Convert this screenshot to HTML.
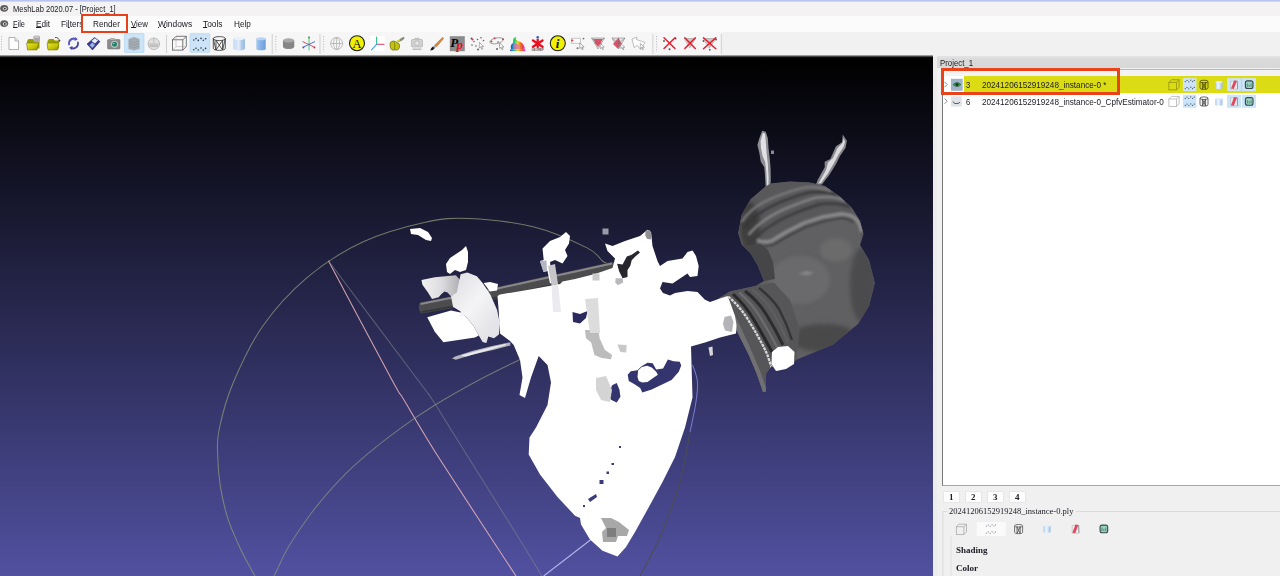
<!DOCTYPE html>
<html>
<head>
<meta charset="utf-8">
<title>MeshLab 2020.07 - [Project_1]</title>
<style>
html,body{margin:0;padding:0;}
body{width:1280px;height:576px;overflow:hidden;position:relative;background:#f0f0f0;font-family:"Liberation Sans",sans-serif;font-size:9px;color:#1a1a1a;filter:blur(0.4px);}
.abs{position:absolute;}
.t{position:absolute;white-space:nowrap;line-height:1;transform-origin:0 0;color:#20202a;}
.t u{text-decoration-thickness:0.8px;text-underline-offset:0.4px;}
#titlebar{left:0;top:0;width:1280px;height:16px;background:#f3f3f3;}
#topline{left:0;top:0;width:1280px;height:2px;background:linear-gradient(#aebcec,#d8dff5);}
#menubar{left:0;top:16px;width:1280px;height:16px;background:#fbfbfb;}
#toolbar{left:0;top:32px;width:1280px;height:24px;background:#f1f1f1;}
#tbwhite{left:0;top:32px;width:722px;height:24px;background:#f6f6f6;}
#darkline{left:0;top:55.4px;width:932.5px;height:2.8px;background:linear-gradient(#c8c8c8,#6a6a6a 35%,#101010 70%,#000);}
#viewport{left:0;top:57px;width:932.5px;height:519px;overflow:hidden;}
#vstrip{left:932.5px;top:57px;width:4.5px;height:519px;background:#ececec;}
#panel{left:937px;top:56px;width:343px;height:520px;background:#f0f0f0;}
#docktitle{left:936.5px;top:56.2px;width:343.5px;height:12px;background:linear-gradient(#e4e4e4,#dadada 30%,#d8d8d8);}
#list{left:942px;top:69px;width:338px;height:417px;background:#ffffff;border-left:1px solid #7a7a7a;border-bottom:1px solid #a8a8a8;border-top:1px solid #b8b8b8;box-sizing:border-box;}
#row1{left:964px;top:76px;width:316px;height:16.5px;background:#dcdc14;}
#redbox1{left:81.2px;top:14.2px;width:42.8px;height:15.3px;border:2.5px solid #e8401a;}
#redbox2{left:941px;top:68px;width:173px;height:21px;border:3px solid #e8431b;}
.tab{position:absolute;top:492px;width:15px;height:10px;background:#fdfdfd;box-shadow:0 0 0 0.5px #dcdcdc;}
.serifb{font-family:"Liberation Serif",serif;font-weight:bold;}
.mono{font-family:"Liberation Serif",serif;}
</style>
</head>
<body>
<div id="titlebar" class="abs"></div>
<div id="topline" class="abs"></div>
<div id="menubar" class="abs"></div>
<div id="toolbar" class="abs"></div>
<div id="tbwhite" class="abs"></div>

<!--TBSTART-->
<svg class="abs" style="left:0;top:0" width="740" height="56" viewBox="0 0 740 56">
<defs>
<linearGradient id="fold" x1="0" y1="0" x2="1" y2="1"><stop offset="0" stop-color="#e4e440"/><stop offset="0.6" stop-color="#c4c400"/><stop offset="1" stop-color="#8a8a00"/></linearGradient>
<linearGradient id="cylA" x1="0" y1="0" x2="1" y2="0"><stop offset="0" stop-color="#b8d0f0"/><stop offset="0.35" stop-color="#f0f6fc"/><stop offset="1" stop-color="#8cb4e4"/></linearGradient>
<linearGradient id="cylB" x1="0" y1="0" x2="1" y2="0"><stop offset="0" stop-color="#a8c8f0"/><stop offset="0.4" stop-color="#88b4e8"/><stop offset="1" stop-color="#6c9cd8"/></linearGradient>
<linearGradient id="rainbow" x1="0" y1="0" x2="1" y2="0"><stop offset="0" stop-color="#2040e0"/><stop offset="0.25" stop-color="#20c0a0"/><stop offset="0.5" stop-color="#e0e020"/><stop offset="0.75" stop-color="#f06020"/><stop offset="1" stop-color="#e020c0"/></linearGradient>
<symbol id="cursor" viewBox="0 0 8 10"><path d="M1 0.5 L1 7.5 L2.8 6 L4 9 L5.2 8.5 L4 5.6 L6.4 5.6 Z" fill="#ffffff" stroke="#707070" stroke-width="0.7"/></symbol>
</defs>
<!-- app icons in title/menu -->
<g id="appicons">
<ellipse cx="4.2" cy="8.3" rx="4" ry="3.4" fill="#606060"/><ellipse cx="4.8" cy="8.6" rx="2" ry="1.7" fill="#d8d8d8"/><circle cx="4.8" cy="8.6" r="0.9" fill="#303030"/>
<ellipse cx="4.2" cy="23.6" rx="4" ry="3.4" fill="#606060"/><ellipse cx="4.8" cy="23.9" rx="2" ry="1.7" fill="#d8d8d8"/><circle cx="4.8" cy="23.9" r="0.9" fill="#303030"/>
</g>
<!-- handles & separators -->
<g stroke="#b4b4b4" stroke-width="1" stroke-dasharray="1 1.6" fill="none">
<path d="M1.5 36 V51"/><path d="M275.8 36 V52"/><path d="M323.6 36 V52"/><path d="M656.6 36 V52"/>
</g>
<g stroke="#d0d0d0" stroke-width="1" fill="none"><path d="M166.5 35 V53"/><path d="M272.2 34 V54"/><path d="M320 34 V54"/><path d="M652.9 34 V54"/><path d="M721.3 34 V54"/></g>
<!-- 1 new -->
<path d="M9 37.5 H15 L18.5 41 V49.5 H9 Z" fill="#ffffff" stroke="#a0a0a0" stroke-width="0.8"/><path d="M15 37.5 V41 H18.5" fill="#e4e4e4" stroke="#a0a0a0" stroke-width="0.7"/>
<!-- 2 folder+db -->
<g><path d="M27 41 L28.5 39 H33 L34.3 40.5 H39.5 V48.5 H27 Z" fill="#9c9c00"/><path d="M26.5 43 H38.5 L37 50 H27.5 Z" fill="url(#fold)" stroke="#6c6c00" stroke-width="0.5"/>
<path d="M33.5 37 V41 A3.2 1.3 0 0 0 39.9 41 V37 Z" fill="#a8a8a8"/><ellipse cx="36.7" cy="37" rx="3.2" ry="1.3" fill="#d0d0d0" stroke="#888" stroke-width="0.4"/></g>
<!-- 3 folder+arrow -->
<g><path d="M47.5 41 L49 39 H53.5 L54.8 40.5 H59 V48.5 H47.5 Z" fill="#9c9c00"/><path d="M47 43 H59 L57.5 50 H48 Z" fill="url(#fold)" stroke="#6c6c00" stroke-width="0.5"/>
<path d="M55 37.5 Q58.5 37 59.5 41" fill="none" stroke="#404040" stroke-width="0.9"/><path d="M58.3 40.5 L59.7 42.2 L60.5 40 Z" fill="#404040"/></g>
<!-- 4 reload -->
<g fill="none" stroke-linecap="round"><path d="M69 44.5 Q68.5 39.5 73.5 38.5 L76 39" stroke="#5858c0" stroke-width="1.8"/><path d="M78 42.5 Q78.5 47.5 73.5 48.5 L71 48" stroke="#4848a8" stroke-width="1.8"/><path d="M75 37 L77.8 39.5 L74.5 41 Z" fill="#5858c0" stroke="none"/><path d="M72 50 L69.2 47.5 L72.5 46 Z" fill="#4848a8" stroke="none"/></g>
<!-- 5 save -->
<g><path d="M87 44 L94.5 37.5 L100 41.5 L92.5 50 Z" fill="#38388c" stroke="#20205c" stroke-width="0.5"/><path d="M91.5 41 L94.8 38.3 L98 40.6 L95 43.5 Z" fill="#e8eef8"/><path d="M89.5 45 L92.5 42.5 L95 45 L92.3 48 Z" fill="#9ab4e0"/></g>
<!-- 6 camera -->
<g><rect x="107.5" y="39.5" width="12.5" height="9.5" rx="1" fill="#8c8c8c" stroke="#686868" stroke-width="0.5"/><rect x="110" y="38" width="5" height="2" fill="#b0b0b0"/><circle cx="114.5" cy="44.3" r="3.4" fill="#d0d0d0"/><circle cx="114.5" cy="44.3" r="2.5" fill="#208068"/><circle cx="113.8" cy="43.6" r="0.8" fill="#80d0b8"/></g>
<!-- 7 layers (checked) -->
<g><rect x="124.5" y="33.5" width="19.5" height="19" rx="1" fill="#cce4f7" stroke="#a8d0f0" stroke-width="0.6"/><path d="M128.5 39 L134 37 L139.5 39 V49 L134 50.5 L128.5 49 Z" fill="#a4acb4"/><g stroke="#848c94" stroke-width="0.45" fill="none"><path d="M128.5 41 L134 42.5 L139.5 41"/><path d="M128.5 43.5 L134 45 L139.5 43.5"/><path d="M128.5 46 L134 47.5 L139.5 46"/></g></g>
<!-- 8 grey globe -->
<g><circle cx="153.8" cy="43.8" r="5.8" fill="#e0e0e0" stroke="#b0b0b0" stroke-width="0.8"/><path d="M148 44 H159.6 M153.8 38 V44" stroke="#b4b4b4" stroke-width="0.7" fill="none"/><rect x="149.5" y="44.5" width="8.5" height="2.6" fill="#c0c0c0"/></g>
<!-- 9 bbox cube -->
<g fill="none" stroke="#585858" stroke-width="0.8"><rect x="172.5" y="39.8" width="10.3" height="10.3" fill="#fafafa"/><path d="M172.5 39.8 L176 36.3 H186.3 V46.6 L182.8 50.1 M182.8 39.8 L186.3 36.3"/><path d="M176 36.3 V46.6 H186.3 M176 46.6 L172.5 50.1" stroke="#a0a0a0" stroke-width="0.5"/></g>
<!-- 10 points (checked) -->
<g><rect x="190" y="33.7" width="19.8" height="18.6" rx="1" fill="#cce4f7" stroke="#a8d0f0" stroke-width="0.6"/><g fill="#303848"><circle cx="193.8" cy="40" r="0.8"/><circle cx="196" cy="38.6" r="0.8"/><circle cx="198.3" cy="40.4" r="0.8"/><circle cx="201" cy="38.4" r="0.8"/><circle cx="203.3" cy="40.2" r="0.8"/><circle cx="205.6" cy="38.8" r="0.8"/><circle cx="193.8" cy="49.8" r="0.8"/><circle cx="196" cy="48.2" r="0.8"/><circle cx="198.3" cy="50" r="0.8"/><circle cx="201" cy="48" r="0.8"/><circle cx="203.3" cy="50" r="0.8"/><circle cx="205.6" cy="48.4" r="0.8"/></g></g>
<!-- 11 wire cyl -->
<g fill="none" stroke="#303030" stroke-width="0.8"><ellipse cx="219.3" cy="38.6" rx="6" ry="2"/><path d="M213.3 38.6 V48.4 A6 2 0 0 0 225.3 48.4 V38.6"/><path d="M216 40.3 V50 M222.6 40.3 V50 M216 40.3 L222.6 50 M222.6 40.3 L216 50 M213.3 38.6 L216 50 M225.3 38.6 L222.6 50"/></g>
<!-- 12 light cyl -->
<g><path d="M233.5 38.5 V48.8 A5.7 1.6 0 0 0 244.9 48.8 V38.5 Z" fill="url(#cylA)"/><ellipse cx="239.2" cy="38.5" rx="5.7" ry="1.6" fill="#e8f0fa"/><path d="M237 40 V50.2 M241.5 40 V50.2" stroke="#9cbce4" stroke-width="0.5"/></g>
<!-- 13 blue cyl -->
<g><path d="M256.3 38.8 V48.8 A4.7 1.5 0 0 0 265.7 48.8 V38.8 Z" fill="url(#cylB)"/><ellipse cx="261" cy="38.8" rx="4.7" ry="1.5" fill="#b8d4f4"/></g>
<!-- 14 grey mesh cyl -->
<g><path d="M283 40.3 V47 A5.6 2 0 0 0 294.2 47 V40.3 Z" fill="#8c8c8c"/><ellipse cx="288.6" cy="40.3" rx="5.6" ry="2" fill="#a8a8a8"/><path d="M283 42.5 A5.6 2 0 0 0 294.2 42.5 M283 44.8 A5.6 2 0 0 0 294.2 44.8" stroke="#6c6c6c" stroke-width="0.5" fill="none"/></g>
<!-- 15 axis small -->
<g fill="none" stroke-width="0.9"><path d="M309 36.8 V50.4" stroke="#40c060"/><path d="M302.5 41.5 L315 47.5" stroke="#d04060"/><path d="M302.5 47.5 L315 41.5" stroke="#4060d0"/><circle cx="303.5" cy="47.5" r="0.9" fill="#7050c0" stroke="none"/><circle cx="314.5" cy="47.5" r="0.9" fill="#c03040" stroke="none"/><circle cx="309" cy="37.5" r="0.9" fill="#30a050" stroke="none"/></g>
<!-- 16 globe wire -->
<g fill="none" stroke="#b0b0b0" stroke-width="0.8"><circle cx="336.6" cy="43.5" r="6"/><path d="M330.6 43.5 H342.6 M336.6 37.5 V49.5"/><ellipse cx="336.6" cy="43.5" rx="3" ry="6"/></g>
<!-- 17 yellow A -->
<g><circle cx="357" cy="43.2" r="7.5" fill="#f0f000" stroke="#202020" stroke-width="1.1"/><text x="357" y="47.6" font-family="Liberation Serif" font-size="12.5" text-anchor="middle" fill="#101010">A</text></g>
<!-- 18 axis xyz -->
<g><rect x="370" y="35.8" width="14.6" height="15.4" fill="#ffffff"/><g fill="none" stroke-width="1.1" stroke-linecap="round"><path d="M376.6 44.4 V37" stroke="#30c090"/><path d="M376.6 44.4 H384" stroke="#e06080"/><path d="M376.6 44.4 L371.5 49.8" stroke="#40a0e0"/></g></g>
<!-- 19 apple+brush -->
<g><path d="M390 45 Q389.5 41.5 393 41 Q396 41 397 43 Q399 42.5 399.5 45 Q400 48.5 397.5 50 H392 Q390 48.5 390 45 Z" fill="#c4c410" stroke="#505000" stroke-width="0.6"/><path d="M394 42 Q395.5 45 394.5 49.5" stroke="#606000" stroke-width="0.6" fill="none"/><path d="M396.5 42.5 L401 38.5 L403.8 37.2 L404.2 38.4 L402 40.3 Z" fill="#8c8c70" stroke="#505040" stroke-width="0.4"/><path d="M395 43 Q396 40 399 39.5 L400.5 41 Z" fill="#d8d820"/></g>
<!-- 20 grey align camera -->
<g><rect x="411.5" y="39.5" width="11" height="7.5" rx="1" fill="#d0d0d0" stroke="#a8a8a8" stroke-width="0.6"/><rect x="414.5" y="37.8" width="5" height="2" fill="#c0c0c0"/><circle cx="417" cy="43.2" r="2.2" fill="#e8e8e8" stroke="#a0a0a0" stroke-width="0.5"/><rect x="412.5" y="48.5" width="9" height="1.4" fill="#b8b8b8"/></g>
<!-- 21 paint brush -->
<g><path d="M442.6 37.3 L443.6 38.6 L436.5 46.8 L434.6 45.2 Z" fill="#d88838" stroke="#905018" stroke-width="0.4"/><path d="M436.5 46.8 L434.6 45.2 L433 46.4 L434.6 48.2 Z" fill="#a0a0a0"/><path d="M434.6 48.2 L433 46.4 Q431 47.2 430.2 50.6 Q433.5 50.3 434.6 48.2 Z" fill="#181818"/></g>
<!-- 22 Pp -->
<g><rect x="449.8" y="36.2" width="15" height="15" fill="#8c8c8c"/><text x="450.3" y="46.5" font-family="Liberation Serif" font-weight="bold" font-style="italic" font-size="13" fill="#000000">P</text><text x="456.6" y="48.8" font-family="Liberation Serif" font-weight="bold" font-style="italic" font-size="13" fill="#e01020">p</text></g>
<!-- 23 points+cursor -->
<g><g fill="#606068"><circle cx="471.5" cy="38.5" r="1"/><circle cx="474" cy="41.5" r="0.8"/><circle cx="477.5" cy="39.5" r="0.8"/><circle cx="481" cy="37.8" r="0.8"/><circle cx="483.5" cy="40.5" r="0.8"/><circle cx="472" cy="45" r="0.8"/><circle cx="476" cy="46" r="0.8"/><circle cx="478" cy="49.5" r="1"/></g><circle cx="472.5" cy="39.5" r="1.1" fill="#d04050"/><use href="#cursor" x="478.5" y="42" width="6.4" height="8"/></g>
<!-- 24 points+ellipse+cursor -->
<g><ellipse cx="496.5" cy="40.8" rx="6.8" ry="2.8" fill="none" stroke="#808088" stroke-width="0.7" transform="rotate(-12 496.5 40.8)"/><g fill="#c04050"><circle cx="491.5" cy="41.5" r="1"/><circle cx="494.5" cy="38.2" r="1"/><circle cx="503" cy="39.3" r="1"/></g><g fill="#606068"><circle cx="498" cy="42" r="0.8"/><circle cx="497" cy="49" r="1"/><circle cx="500" cy="45" r="0.7"/></g><use href="#cursor" x="498.8" y="42.5" width="6.4" height="8"/></g>
<!-- 25 rainbow bunny -->
<g><path d="M511 49 Q510 44.5 513 43 Q512.5 40 514.5 38 Q515 36.5 516 37 Q516.5 38.5 515.8 40 Q517.5 39.5 518 41 Q521 41.5 523 44 Q525 46.5 524.5 49.5 Z" fill="url(#rainbow)"/><path d="M513.5 45 Q516 42.5 519 45 Q520 47 519 49.5 H514 Z" fill="#f060c0" opacity="0.7"/><path d="M514.2 38 Q513.8 40.5 515.2 41" stroke="#20c040" stroke-width="1.2" fill="none"/><rect x="510.2" y="49.3" width="15" height="1.8" fill="url(#rainbow)"/></g>
<!-- 26 georef -->
<g><g stroke="#e81020" stroke-width="2.4" stroke-linecap="round"><path d="M533 40.5 L542.5 46.8"/><path d="M542.5 40.5 L533 46.8"/><path d="M537.7 39.8 V47"/></g><circle cx="537.7" cy="37.2" r="1.3" fill="#3060e0"/><text x="537.7" y="51" font-family="Liberation Sans" font-size="2.9" font-weight="bold" text-anchor="middle" fill="#505050">GEOREF</text></g>
<!-- 27 yellow i -->
<g><circle cx="557.8" cy="43.3" r="7.5" fill="#f0f000" stroke="#202020" stroke-width="1.1"/><text x="557.6" y="47.8" font-family="Liberation Serif" font-style="italic" font-weight="bold" font-size="13" text-anchor="middle" fill="#101010">i</text></g>
<!-- 28 rect select -->
<g><rect x="571.5" y="38.2" width="9" height="5" fill="#fafafa" stroke="#a8a8a8" stroke-width="0.6"/><circle cx="572.2" cy="40.5" r="1.1" fill="#d04050"/><circle cx="583.5" cy="38.6" r="0.9" fill="#707078"/><circle cx="577.5" cy="48.2" r="1" fill="#707078"/><use href="#cursor" x="579" y="42.5" width="6.4" height="8"/></g>
<!-- 29 tri select -->
<g><path d="M591.5 38 H604.5 L598 49 Z" fill="#e4e4e4" stroke="#707070" stroke-width="0.5"/><path d="M593.5 39 L602.5 39 L600.5 43.5 L598 47 L595 43 Z" fill="#e05068"/><path d="M591.5 38 L598 43.5 L604.5 38 M594.5 43.5 H601.5" stroke="#707070" stroke-width="0.5" fill="none"/><use href="#cursor" x="599.5" y="43" width="6" height="7.5"/></g>
<!-- 30 tri select 2 -->
<g><path d="M612 38 H625 L618.5 49 Z" fill="#e4e4e4" stroke="#707070" stroke-width="0.5"/><path d="M613 44 L618.5 37.8 L622 44.5 L617.5 48.5 Z" fill="#e05068"/><path d="M612 38 L618.5 43.5 L625 38 M615 43.5 H622 M618.5 37.8 V48.5" stroke="#707070" stroke-width="0.5" fill="none"/><use href="#cursor" x="620" y="43" width="6" height="7.5"/></g>
<!-- 31 arrow poly -->
<g><path d="M632 39 L637 37 L636.5 39.5 L645 42.5 L640.5 49.5 L637.5 45.5 L634 47.5 Z" fill="#fcfcfc" stroke="#a8a8a8" stroke-width="0.7"/><use href="#cursor" x="639.5" y="43" width="6" height="7.5"/></g>
<!-- 32-34 red X -->
<g stroke="#e81828" stroke-width="1.4" stroke-linecap="round" fill="none">
<g fill="#505058" stroke="none"><circle cx="664" cy="41" r="0.9"/><circle cx="675.5" cy="38.5" r="1"/><circle cx="669.5" cy="49.2" r="1"/></g>
<path d="M664 37.8 L675 48.6 M675 37.8 L664 48.6"/>
<path d="M684.5 38.5 H695.5 L690 47.5 Z" fill="#c8c8c8" stroke="#909090" stroke-width="0.5"/><path d="M684.8 37.8 L695.3 48.6 M695.3 37.8 L684.8 48.6"/>
<path d="M703.5 38.5 H716 L709.5 48 Z" fill="#c8c8c8" stroke="#909090" stroke-width="0.5"/><g fill="#505058" stroke="none"><circle cx="703.5" cy="41" r="0.9"/><circle cx="716" cy="39.5" r="0.9"/><circle cx="709.8" cy="49.8" r="0.9"/></g><path d="M703.5 37.8 L715.8 48.8 M715.8 37.8 L703.5 48.8"/>
</g>
</svg>
<!--TBEND-->
<!-- title + menu text -->
<span class="t" id="ttl" style="left:12.5px;top:4.9px;font-size:9px;transform:scaleX(0.834);">MeshLab 2020.07 - [Project_1]</span>
<span class="t m" id="m1" style="left:12.8px;top:19.5px;transform:scaleX(0.82);"><u>F</u>ile</span>
<span class="t m" id="m2" style="left:35.6px;top:19.5px;transform:scaleX(0.908);"><u>E</u>dit</span>
<span class="t m" id="m3" style="left:60.6px;top:19.5px;transform:scaleX(0.913);">Fi<u>l</u>ters</span>
<span class="t m" id="m4" style="left:92.5px;top:19.5px;transform:scaleX(0.911);"><u>R</u>ender</span>
<span class="t m" id="m5" style="left:130.6px;top:19.5px;transform:scaleX(0.873);"><u>V</u>iew</span>
<span class="t m" id="m6" style="left:157.8px;top:19.5px;transform:scaleX(0.934);"><u>W</u>indows</span>
<span class="t m" id="m7" style="left:203px;top:19.5px;transform:scaleX(0.928);"><u>T</u>ools</span>
<span class="t m" id="m8" style="left:233.8px;top:19.5px;transform:scaleX(0.907);"><u>H</u>elp</span>

<div id="viewport" class="abs">
<svg id="vp" width="933" height="519" viewBox="0 57 933 519" style="display:block">
<defs>
<linearGradient id="bg" x1="0" y1="57" x2="0" y2="883" gradientUnits="userSpaceOnUse">
<stop offset="0" stop-color="#000000"/><stop offset="1" stop-color="#8080ff"/>
</linearGradient>
</defs>
<rect x="0" y="57" width="933" height="519" fill="url(#bg)"/>
<!--MESHSTART-->
<g id="trackball" fill="none" stroke-width="1.05">
<path d="M257.0 580.0 C255.9 578.0 253.4 573.3 250.7 568.2 C248.0 563.1 244.4 557.5 240.6 549.2 C236.8 541.0 231.3 529.3 227.9 518.7 C224.5 508.1 222.0 496.4 220.3 485.8 C218.6 475.2 217.9 464.7 217.7 455.4 C217.5 446.1 216.5 441.9 219.0 430.0 C221.5 418.1 225.3 401.4 232.7 384.0 C240.0 366.6 250.5 343.5 263.0 325.7 C275.4 308.0 290.7 291.3 307.3 277.3 C324.0 263.4 343.0 251.2 362.7 242.1 C382.4 232.9 407.6 226.2 425.3 222.3 C443.0 218.4 450.9 217.7 469.0 218.5 C487.1 219.3 514.4 222.2 534.1 227.1 C553.8 232.0 575.7 242.3 587.1 247.9 C598.5 253.6 598.7 258.0 602.5 261.0 C606.3 264.0 603.8 260.7 610.0 266.0" stroke="#8a9678" stroke-opacity="0.78"/>
<path d="M692.5 365.0 C695.1 371.1 697.0 375.8 697.5 382.5 C698.0 389.2 696.8 396.8 695.5 405.0 C694.2 413.2 692.6 419.2 690.0 432.0" stroke="#9090e8" stroke-opacity="0.75"/>
<path d="M690.0 432.0 C687.4 444.8 685.0 464.5 680.0 482.0 C675.0 499.5 666.7 521.3 660.0 537.0 C653.3 552.7 643.8 568.5 640.0 576.0 C636.2 583.5 637.5 581.0 637.0 582.0" stroke="#4e4e4c" stroke-opacity="0.9"/>
<path d="M328.4 260.8 C339.0 280.7 379.4 356.8 392.0 380.0 C404.6 403.2 396.0 386.8 404.0 400.0 C412.0 413.2 421.3 430.2 440.0 459.5 C458.7 488.8 502.7 555.6 516.0 576.0 C529.3 596.4 519.3 581.0 520.0 582.0" stroke="#e8b0b8" stroke-opacity="0.9"/>
<path d="M328.4 260.8 C343.3 280.7 400.5 356.8 417.9 380.0 C435.2 403.2 426.7 391.3 432.5 400.0 C438.3 408.7 437.9 408.7 452.5 432.0 C467.1 455.3 504.9 515.7 520.0 540.0 C535.1 564.3 539.2 571.7 543.0 578.0" stroke="#80808c" stroke-opacity="0.6"/>
<path d="M270.0 584.0 C271.0 582.0 272.9 578.2 276.0 572.0 C279.1 565.8 283.2 555.9 288.7 546.6 C294.2 537.3 301.8 525.9 309.0 516.2 C316.2 506.5 323.3 497.6 331.8 488.3 C340.3 479.0 348.6 470.3 360.0 460.4 C371.4 450.5 387.5 437.9 400.0 428.7 C412.5 419.5 421.8 413.1 435.0 405.0 C448.2 396.9 464.8 387.6 479.0 380.0 C493.2 372.4 513.2 362.9 520.0 359.5" stroke="#8c9680" stroke-opacity="0.7"/>
<path d="M543.7 576 L591 539.5" stroke="#c8c8ff" stroke-opacity="0.85"/>
</g>
<g id="pipe">
<defs>
<filter id="bl2" x="-20%" y="-20%" width="140%" height="140%"><feGaussianBlur stdDeviation="2.2"/></filter>
<filter id="bl1" x="-20%" y="-20%" width="140%" height="140%"><feGaussianBlur stdDeviation="0.8"/></filter>
<clipPath id="pipeclip"><path d="M766 186 L771 183.5 L790 181.5 L810 182.5 L825 186 L840.4 197 L852 208 L860 221 L863.5 234 L860 245 L869 260 L874.8 283 L869 306 L858 324 L833 344.4 L806 355.7 L796 360 L790 366 L778 371 L771.7 366 L766 374 L766 392 L763 392 L756.4 373 L748.8 355 L737.3 332 L727.7 313 L717 299.5 L729.7 291.5 L756 285.8 L764 281 L757.4 265 L750.6 253.5 L741.6 244.4 L738.2 233 L741.6 215 L750.6 199.3 Z"/></clipPath>
</defs>
<!-- antennas -->
<path d="M762.2 130.8 L765.7 131.8 L767.8 138 L768.5 147.8 L769.9 160.3 L770.6 168.6 L770.8 181 L769.9 188 L765.7 188 L765 175.6 L764.3 167.2 L760.8 161.7 L759.4 153.3 L757.4 145 L759.4 138 Z" fill="#8e8e92"/>
<path d="M762.8 133 L765 133.5 L765.8 142 L766.5 152 L767.8 164 L768.6 178 L768.4 186 L767 186 L766.4 172 L765.2 162 L762.6 156 L761 148 L760.6 141 Z" fill="#e2e2e6"/>
<rect x="771" y="150.5" width="3" height="3.5" fill="#8a8a90"/>
<path d="M842.8 134.6 L846.9 140.8 L845.6 147.8 L840 156 L835.8 164.4 L828.9 175.6 L821.9 184.6 L815.7 185.3 L817.8 179.7 L824.7 167.2 L824.7 161.7 L830.3 158.9 L835.8 146.4 L842 142.2 Z" fill="#88888c"/>
<path d="M843.5 138.5 L845 142 L843.5 147 L838.5 154.5 L834 163 L827.5 174 L821 183 L818.5 183.5 L826 170 L828 162.5 L833 158 L837.5 148 L842.5 143 Z" fill="#dcdce0"/>
<g clip-path="url(#pipeclip)">
<rect x="710" y="175" width="175" height="225" fill="#606062"/>
<!-- elbow shading -->
<ellipse cx="800" cy="280" rx="30" ry="24" fill="#727274" filter="url(#bl2)" opacity="0.6"/>
<ellipse cx="863" cy="285" rx="13" ry="38" fill="#4c4c4e" filter="url(#bl2)"/>
<ellipse cx="824" cy="338" rx="34" ry="14" fill="#48484a" filter="url(#bl2)"/>
<ellipse cx="836" cy="250" rx="16" ry="12" fill="#6e6e70" filter="url(#bl2)" opacity="0.8"/>
<path d="M798 274 L806 271 L814 272.5 L808 275.5 Z" fill="#858587" filter="url(#bl1)"/>
<!-- cap -->
<path d="M764 189 L771 183.5 L790 181.5 L810 182.5 L825 186 L840.4 197 L852 208 L860 221 L863.5 234 L860 246 L861.6 230 Q860.5 224 856 219 Q852 214.5 841.3 213.8 L822.5 216.9 L803.8 223 L785 232.5 L772.5 240.3 Q764 243.5 758 240 L754 250 L750.6 253.5 L741.6 244.4 L738.2 233 L741.6 215 L750.6 199.3 Z" fill="#58585a"/>
<ellipse cx="750" cy="226" rx="10" ry="24" fill="#3c3c3e" filter="url(#bl2)"/>
<g fill="none" filter="url(#bl1)">
<path d="M741.5 222 Q751 207 771.5 198.5 Q789 191 805 187.5 Q819 186 831 191" stroke="#7e7e80" stroke-width="2.2"/>
<path d="M744.5 228 Q755 213.5 776 204 Q793.5 196.5 809 192.5 Q824 190.5 837 195.5" stroke="#363638" stroke-width="2.2"/>
<path d="M748.5 235 Q759.5 221 781.5 210.5 Q799.5 202.5 814.5 198 Q831.5 195 845.5 200.5" stroke="#828284" stroke-width="2.6"/>
<path d="M752.5 241 Q764 228 786 217 Q804 209 819 204.5 Q836 201.5 850 207" stroke="#3a3a3c" stroke-width="2.4"/>
<path d="M757 240 Q764 243.5 772.5 240.3 L785 232.5 L803.8 223 L822.5 216.9 L841.3 213.8 Q852 214.5 856 219 Q860.5 224 861.6 232" stroke="#8a8a8c" stroke-width="3.4"/>
<path d="M759 245 Q766 247.5 774.5 244 L787 236.5 L805.5 227 L824 221 L841 218 Q850 218.5 854 223" stroke="#38383a" stroke-width="1.6"/>
</g>
<path d="M742 246 L752 255 L758 266 L764 281 L775 279 L773 262 L768 250 L760 244 Z" fill="#464648"/>
<!-- lower arm -->
<path d="M717 299.5 L729.7 291.5 L756 285.8 L774 282.4 L790 300 L800 330 L796 360 L790 366 L778 371 L771.7 366 L766 374 L766 392 L763 392 L756.4 373 L748.8 355 L737.3 332 L727.7 313 Z" fill="#565658"/>
<g fill="none">
<path d="M719 299 Q729 310 737 327 Q748 350 757 372 L764 392" stroke="#707072" stroke-width="6.5"/>
<path d="M728.2 296.5 Q738 305 745 315 Q753 327 758.6 337.7 Q764 347 767.7 355.7 L772.2 369.3" stroke="#d6d6d8" stroke-width="2.3" stroke-dasharray="3 0.9"/>
<path d="M733 294 Q746 306 754 320 Q764 337 772 352" stroke="#28282a" stroke-width="3"/>
<path d="M739 292.5 Q752 303 760 317 Q770 333 777 347" stroke="#6c6c6e" stroke-width="2.4"/>
<path d="M745 291 Q758 301 766 314 Q776 330 783 345" stroke="#2c2c2e" stroke-width="3"/>
<path d="M752 289.5 Q765 299 773 312 Q782 327 788 343" stroke="#5e5e60" stroke-width="2.4"/>
<path d="M759 288 Q771 297 779 309 Q787 324 792 340" stroke="#343436" stroke-width="2.4"/>
</g>
</g>
</g>
<g id="rod">
<path d="M420 302.5 L453 296 L491 288.5 L612 262 L628 264 L628 280 L612 273.5 L491 300 L453 308 L421 313.5 Q417 308 420 302.5 Z" fill="#4c4c4e"/>
<path d="M420.5 304 L453 297.5 L491 290 L612 263.5" stroke="#88888a" stroke-width="2" fill="none"/>
<path d="M421.5 312 L453 306.5 L491 298.5 L612 272" stroke="#353537" stroke-width="1.6" fill="none"/>
</g>
<g id="mesh" fill="#ffffff">
<!-- small blobs -->
<path d="M410 229 L420 228 L428 232 L432 238 L431 241 L426 240 L418 235 L411 234 Z"/>
<path d="M466 246 L468 252 L468 262 L466 270 L460 272 L455 270 L450 274 L447 272 L446 264 L450 258 L456 254 L462 250 Z"/>
<!-- left box -->
<defs><linearGradient id="ulg" x1="422" y1="285" x2="458" y2="285" gradientUnits="userSpaceOnUse"><stop offset="0" stop-color="#f2f2f2"/><stop offset="0.55" stop-color="#dcdcde"/><stop offset="1" stop-color="#b4b4b8"/></linearGradient>
<linearGradient id="drg" x1="455" y1="280" x2="500" y2="320" gradientUnits="userSpaceOnUse"><stop offset="0" stop-color="#e2e2e6"/><stop offset="0.5" stop-color="#f4f4f6"/><stop offset="1" stop-color="#e4e4e8"/></linearGradient></defs>
<path d="M421.5 280 L434.8 277.2 L455.9 275.3 L461 281 L458 293 L451 296.3 L447.5 292.5 L444.4 291.5 L441 294.5 L438.7 297.3 L432 299 L428 292.5 L422.4 284.8 Z" fill="url(#ulg)"/>
<path d="M427.2 317.3 L451 310.6 L460.6 312.5 L464.5 315.4 L473 325 L478.8 335.5 L475 337.4 L443.4 342.2 L434.8 331.7 Z" fill="#ffffff"/>
<path d="M460.6 274.3 L467.3 272.4 L476.9 276.2 L482.6 283 L490.3 294.4 L497 309.7 L499.8 323 L498.9 334.5 L494 338.3 L488.3 336.4 L486.4 343 L482.6 342 L478.8 335.5 L473 325 L464.5 315.4 L461.6 317.3 L460.6 311.6 L453 306.8 L451 296.3 L456.8 292.5 Z" fill="url(#drg)"/>
<path d="M483.6 283 L490 282 L498 284 L497 290.6 L490 291.5 Z" fill="#ffffff"/>
<!-- blob C -->
<path d="M542.5 248.5 L550 241 L560 237 L566 232 L570 236 L569 243.5 L565 250 L567.5 256 L562.5 263.5 L555 260 L550 262 L551 270 L555 281 L550 283.5 L547.5 271 L543.7 272 L540 261 L543.7 260 Z"/>
<!-- thin spike -->
<path d="M452 358.4 L455 356.5 L473 350.8 L492.2 346 L510.3 342.2 L510.3 345.5 L494 349.8 L473 354.6 L455.9 359.7 Z" fill="#b4b4bc"/>
<path d="M462 355.5 L492 347.5 L506 344.5 L492 348.8 L466 356 Z" fill="#ececf0" stroke="#ececf0" stroke-width="0.8"/>
<!-- main body -->
<path d="M497.5 296 L500 294.5 L530 289.5 L560 284 L562.5 281.5 L575 279 L595 274 L612.5 268 L615 258.5 L607.5 251 L605 243.5 L612.5 246 L625 241 L640 236 L647.5 229.7 L651 232 L652.5 246 L657.5 261 L660 266 L667.5 261 L682.5 258.5 L687.5 252 L692.5 250.5 L696 256 L698.7 266 L697.5 276 L690 277 L687.5 273.5 L680 278.5 L672.5 283.5 L662.5 282 L660 288.5 L663 293 L670 295.5 L675 293 L687.5 291 L697.5 292 L705 299.7 L710 302 L720 298.5 L727.5 296 L730 302 L735 316 L736.5 325 L736 333.5 L720 337.5 L705 342.5 L691 346.5 L692.5 397.5 L685 427.5 L675 457 L662.5 482 L647.5 509.5 L635 532 L626 547 L617.5 556.5 L602.5 550.7 L590 539.5 L581 524.5 L580 518 L575 515.7 L557.5 497 L540 474.5 L528.7 454.5 L529.5 437.5 L536 427.5 L547.5 405 L551 382.5 L547.5 365 L538.7 356 L531 377.5 L525 398 L519.5 395 L522.5 377.5 L520 360 L513.7 345 L510 341 L500 333.5 L498.7 311 Z"/>
</g>
<g id="patches">
<!-- holes -->
<path d="M627.7 374.8 L630.8 371.2 L637.5 370.2 L641.2 366.5 L647.5 362.7 L652.7 363.3 L656.2 369.6 L663.1 368.5 L667.9 359.6 L673.5 361.2 L679.8 361.7 L681.2 365.4 L678.8 371.7 L671.5 380.0 L662.1 384.6 L651.7 389.4 L642.3 392.5 L640.2 387.9 L635.0 384.6 L628.8 381.0 Z" fill="#34346e"/>
<path d="M638.1 370.6 L641.7 367.1 L647.1 365.8 L651.7 367.5 L656.2 371.7 L657.9 374.8 L651.7 379.0 L647.5 382.1 L642.3 382.5 L638.8 381.0 L637.5 376.9 Z" fill="#ffffff"/>
<path d="M609.6 392.5 L612.1 385.2 L616.7 383.1 L619.4 389.4 L620.4 396.7 L616.7 402.5 L611.0 399.8 L609.0 396.2 Z" fill="#34346e"/>
<path d="M585.0 330.0 L598.5 330.0 L599.6 338.3 L604.8 349.8 L612.1 355.0 L611.0 359.2 L601.7 358.1 L594.4 355.0 L591.2 342.5 L586.0 338.3 Z" fill="#bcbcbc"/>
<path d="M617.3 344.6 L626.7 345.0 L626.2 352.5 L620.4 351.9 Z" fill="#c8c8c8"/>
<path d="M572.5 312 L580 314 L587.5 311 L586 318 L580 323.5 L573 322 Z" fill="#2a2a5c"/>
<path d="M617.1 263.8 L622.6 264.4 L626.8 256.4 L631.7 254.7 L637.9 250.6 L640.0 252.6 L635.8 256.1 L631.7 260.3 L630.3 265.8 L627.5 270.0 L627.5 276.9 L622.6 278.3 L619.2 271.4 Z" fill="#26262c"/>
<path d="M645.6 230.8 L649.7 230.0 L651.4 233.9 L650.8 239.4 L646.9 238.8 L645.3 235.3 Z" fill="#909094"/>
<path d="M615.7 278.3 L622.6 278.3 L623.3 282.5 L617.8 285.3 L615.3 282.5 Z" fill="#b8b8bc"/>
<!-- grey patches -->
<rect x="602.5" y="228.5" width="6" height="6" fill="#9a9aa8"/>
<path d="M548 266 L555 264 L558 284 L551.5 285.5 Z" fill="#c6c6ca"/>
<path d="M551.5 285.5 L558 284 L561 312 L553 312 Z" fill="#ebebef"/>
<path d="M540 261 L546.5 260.5 L547 271 L543.5 272 Z" fill="#b4b4c2"/>
<path d="M585 299 L598 298 L600 333 L590 333 Z" fill="#dcdcdc"/>
<path d="M596 378 L606 376 L612 390 L610 402 L601 400 L596 390 Z" fill="#d4d4d4"/>
<rect x="592.5" y="273.5" width="7" height="7" fill="#cacaca"/>
<path d="M601 518 L611 518 L619 522 L629 530 L627 536 L618 536 L616 542 L603 542 L602 532 L606 528 Z" fill="#a8a8a8"/>
<rect x="607" y="528" width="9" height="9" fill="#7e7e7e"/>
<!-- tiny holes -->
<g fill="#3a3a7c"><rect x="619" y="446" width="2" height="2"/><rect x="611.5" y="463" width="2.5" height="2"/><rect x="606.5" y="471.5" width="2.5" height="2.5"/><rect x="599.5" y="480" width="4" height="4"/><path d="M588 499 L596 494 L597 497 L590 502 Z"/><rect x="583" y="505" width="2" height="2"/></g>
<path d="M708.5 347.5 L712.5 346.5 L713 355 L710 356 Z" fill="#d8d8da"/>
<path d="M724.5 317 L731 315.5 L733.5 322 L732 332 L725 330.5 L723 324 Z" fill="#b4b4b8"/>
<!-- white blob on pipe flange -->
<path d="M772 352 L778 347 L788 346 L794.5 352 L794 364 L786 369 L776 371 L771.5 364 Z" fill="#ffffff"/>
</g>
<!--MESHEND-->
</svg>
</div>
<div id="darkline" class="abs"></div>
<div id="vstrip" class="abs"></div>

<div id="panel" class="abs"></div>
<div id="docktitle" class="abs"></div>
<span class="t" id="pj" style="left:939.8px;top:59.3px;font-size:9px;transform:scaleX(0.868);">Project_1</span>
<div id="list" class="abs"></div>
<div id="listhead" class="abs" style="left:943px;top:70px;width:337px;height:5.8px;background:#f3f3f3;"></div>
<div id="row1" class="abs"></div>
<span class="t" id="r1n" style="left:966px;top:81.4px;transform:scaleX(0.85);">3</span>
<span class="t" id="r1t" style="left:982px;top:81.4px;transform:scaleX(0.904);">20241206152919248_instance-0 *</span>
<span class="t" id="r2n" style="left:966px;top:97.9px;transform:scaleX(0.85);">6</span>
<span class="t" id="r2t" style="left:982px;top:97.9px;transform:scaleX(0.904);">20241206152919248_instance-0_CpfvEstimator-0</span>

<!--PNSTART-->
<svg class="abs" style="left:937px;top:56px" width="343" height="520" viewBox="937 56 343 520">
<defs>
<linearGradient id="pcyl" x1="0" y1="0" x2="1" y2="0"><stop offset="0" stop-color="#a8c8f0"/><stop offset="0.4" stop-color="#f4f8fd"/><stop offset="1" stop-color="#98bcec"/></linearGradient>
<g id="i-cube" fill="none" stroke-width="0.7"><rect x="0" y="2.6" width="7.6" height="7.6"/><path d="M0 2.6 L2.6 0 H10.2 V7.6 L7.6 10.2 M7.6 2.6 L10.2 0"/></g>
<g id="i-pts" fill="#404858"><circle cx="2" cy="2.6" r="0.6"/><circle cx="3.8" cy="1.4" r="0.6"/><circle cx="5.6" cy="2.8" r="0.6"/><circle cx="7.6" cy="1.2" r="0.6"/><circle cx="9.4" cy="2.6" r="0.6"/><circle cx="11" cy="1.4" r="0.6"/><circle cx="2" cy="9.6" r="0.6"/><circle cx="3.8" cy="8.4" r="0.6"/><circle cx="5.6" cy="9.8" r="0.6"/><circle cx="7.6" cy="8.2" r="0.6"/><circle cx="9.4" cy="9.6" r="0.6"/><circle cx="11" cy="8.4" r="0.6"/></g>
<g id="i-wire" fill="none" stroke-width="0.8"><ellipse cx="4" cy="1.4" rx="4" ry="1.3"/><path d="M0 1.4 V8 A4 1.3 0 0 0 8 8 V1.4 M2.4 2.4 V9.2 M5.6 2.4 V9.2 M2.4 2.4 L5.6 9.2 M5.6 2.4 L2.4 9.2"/></g>
<g id="i-cyl"><path d="M0 1 V7 A3.6 1 0 0 0 7.2 7 V1 Z" fill="url(#pcyl)"/><ellipse cx="3.6" cy="1" rx="3.6" ry="1" fill="#e4eefa"/></g>
<g id="i-red"><path d="M0.4 1.2 H7 V9 H0.4 Z" fill="#f4f4f4" stroke="#909090" stroke-width="0.4"/><path d="M3.6 0.4 L6.6 0.8 L3.4 9 L0.6 8.6 Z" fill="#e04860"/><path d="M6.8 1 L7.2 8.8" stroke="#606060" stroke-width="0.5"/></g>
<g id="i-teal"><rect x="0.5" y="0.5" width="7.6" height="7.6" rx="2" fill="#98d4c4" stroke="#384848" stroke-width="1.1"/><path d="M2.4 3 V6.4 M4.3 4.2 V6.4 M6.2 3 V6.4" stroke="#4a7468" stroke-width="0.8"/></g>
</defs>
<!-- row1 icons -->
<g>
<rect x="951" y="78.8" width="11.7" height="12" fill="#9fb4c8"/><path d="M953 84.6 Q957 80.6 961 84.6 Q957 88.6 953 84.6 Z" fill="#28a040" stroke="#204030" stroke-width="0.5"/><circle cx="957" cy="84.6" r="1.3" fill="#103018"/>
<path d="M944.6 82 L947.2 84.6 L944.6 87.2" fill="none" stroke="#707070" stroke-width="0.8"/>
<use href="#i-cube" x="1168.9" y="79.7" stroke="#8a8a10"/>
<rect x="1182.9" y="78.1" width="13.5" height="13" fill="#cce4f7"/><use href="#i-pts" x="1183.2" y="79"/>
<use href="#i-wire" x="1200" y="80.1" stroke="#4a4a08"/>
<use href="#i-cyl" x="1215.3" y="81"/>
<rect x="1227" y="78.1" width="14.3" height="13" fill="#cce4f7"/><use href="#i-red" x="1230.4" y="80"/>
<rect x="1242" y="78.1" width="14" height="13" fill="#cce4f7"/><use href="#i-teal" x="1244.9" y="80.4"/>
</g>
<!-- row2 icons -->
<g>
<rect x="951" y="96.4" width="10.8" height="10.2" fill="#dfe3ea"/><path d="M953 101.5 Q953.5 104 957 103.6 Q959.5 103.4 960 102" fill="none" stroke="#383838" stroke-width="0.8"/>
<path d="M944.6 98.6 L947.2 101.2 L944.6 103.8" fill="none" stroke="#707070" stroke-width="0.8"/>
<use href="#i-cube" x="1168.9" y="96.4" stroke="#a8a8a8"/>
<rect x="1182.9" y="94.8" width="13.5" height="13" fill="#cce4f7"/><use href="#i-pts" x="1183.2" y="95.7"/>
<use href="#i-wire" x="1200" y="96.8" stroke="#404040"/>
<use href="#i-cyl" x="1215.3" y="97.7"/>
<rect x="1227" y="94.8" width="14.3" height="13" fill="#cce4f7"/><use href="#i-red" x="1230.4" y="96.7"/>
<rect x="1242" y="94.8" width="14" height="13" fill="#cce4f7"/><use href="#i-teal" x="1244.9" y="97.1"/>
</g>
<!-- group box -->
<g fill="none" stroke="#dadada" stroke-width="1"><path d="M947 511.5 H942.8 V576"/><path d="M1076 511.5 H1280"/><path d="M951.2 536 V576" stroke="#e2e2e2"/></g>
<!-- bottom icons -->
<g>
<use href="#i-cube" x="956.3" y="524.2" stroke="#a0a0a0"/>
<rect x="976.7" y="522" width="29" height="14" fill="#fafafa"/><use href="#i-pts" x="984.5" y="523.5" opacity="0.6"/>
<use href="#i-wire" x="1014.6" y="524.4" stroke="#505050"/>
<use href="#i-cyl" x="1043.4" y="524.8"/>
<use href="#i-red" x="1071.8" y="524.2"/>
<use href="#i-teal" x="1099.6" y="524.6"/>
</g>
</svg>
<!--PNEND-->
<!-- tabs -->
<div class="tab" style="left:944px"></div><div class="tab" style="left:966px"></div><div class="tab" style="left:988px"></div><div class="tab" style="left:1010px"></div>
<span class="t serifb" style="left:949px;top:492.5px;font-size:9px;">1</span>
<span class="t serifb" style="left:971px;top:492.5px;font-size:9px;">2</span>
<span class="t serifb" style="left:993px;top:492.5px;font-size:9px;">3</span>
<span class="t serifb" style="left:1015px;top:492.5px;font-size:9px;">4</span>
<span class="t mono" id="fn" style="left:949px;top:507px;font-size:8.5px;">20241206152919248_instance-0.ply</span>
<span class="t serifb" id="shd" style="left:955.9px;top:546px;font-size:9px;">Shading</span>
<span class="t serifb" id="col" style="left:955.9px;top:564px;font-size:9px;">Color</span>

<div id="redbox1" class="abs"></div>
<div id="redbox2" class="abs"></div>
</body>
</html>
